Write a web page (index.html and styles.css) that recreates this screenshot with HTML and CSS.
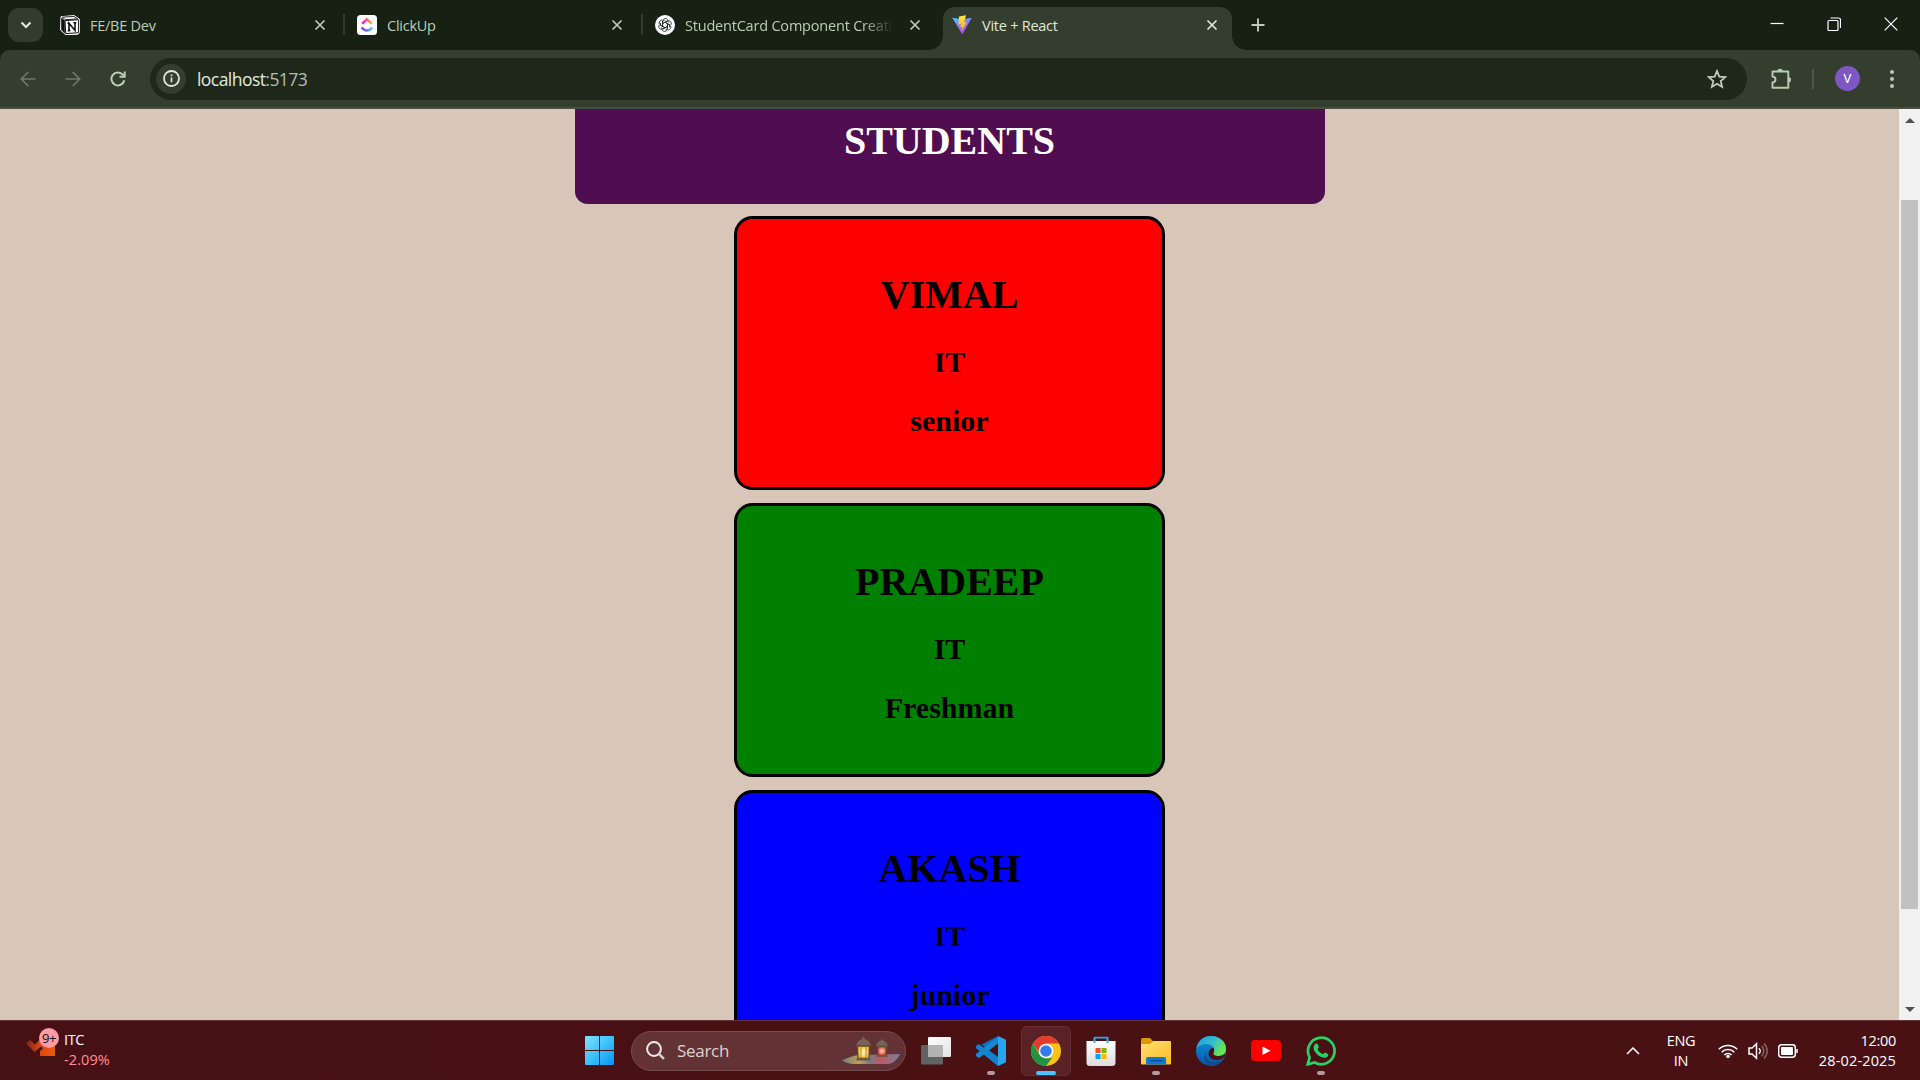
FILE: index.html
```html
<!DOCTYPE html>
<html lang="en">
<head>
<meta charset="utf-8">
<title>Vite + React</title>
<link rel="stylesheet" href="styles.css">
</head>
<body>
<div class="tabstrip">
  <div class="tab-search"><svg width="12" height="8" viewBox="0 0 12 8"><path d="M1.5 1.5 6 6 10.5 1.5" fill="none" stroke="#dfe8d8" stroke-width="2.2"/></svg></div>
  <div class="tab tab-first">
    <svg class="fav" viewBox="0 0 20 20"><path d="M1 1.700 14.200.6 19.400 4.200v13.600l-1.400 1.400-12.600.4L.6 15z" fill="#fff" stroke="#fff" stroke-width="1"/><path d="M1.200 2.600 4.800 5.500v13.200L1.200 14.500z" fill="#111"/><path d="M2.300 2.200 14 1.400l3.600 2.500-12.200.8z" fill="#fff" stroke="#111" stroke-width=".9"/><path d="M5 5.600 18.600 4.700v13l-12.900.900z" fill="#fff" stroke="#111" stroke-width="1"/><path d="M9 15.600V8.200l6 7.200V7.500M7.500 8.200h2.400M13.500 7.700h2.800M7.700 15.600h2.600" fill="none" stroke="#111" stroke-width="1.600"/></svg>
    <span class="title">FE/BE Dev</span>
    <svg class="x" viewBox="0 0 12 12"><path d="M1.500 1.500l9 9m0-9l-9 9"/></svg>
  </div>
  <div class="tab ruled">
    <svg class="fav" viewBox="0 0 20 20"><defs><linearGradient id="cu1"><stop offset="0" stop-color="#ff02f0"/><stop offset="1" stop-color="#ffb800"/></linearGradient><linearGradient id="cu2"><stop offset="0" stop-color="#8930fd"/><stop offset="1" stop-color="#49ccf9"/></linearGradient></defs><rect width="20" height="20" rx="3.500" fill="#fff"/><path d="M5.200 8.600 10 4.400l4.800 4.200" fill="none" stroke="url(#cu1)" stroke-width="2.500"/><path d="M4.800 12.400c2.800 4.200 7.600 4.200 10.400 0" fill="none" stroke="url(#cu2)" stroke-width="2.500"/></svg>
    <span class="title">ClickUp</span>
    <svg class="x" viewBox="0 0 12 12"><path d="M1.500 1.500l9 9m0-9l-9 9"/></svg>
  </div>
  <div class="tab ruled tab-third">
    <svg class="fav" viewBox="0 0 20 20"><circle cx="10" cy="10" r="10" fill="#fff"/><g fill="none" stroke="#222" stroke-width=".8"><path id="petal" d="M7.600 11.400V6.300c0-3 4-3.900 5.300-1.300M7.600 8.600 12 6l2.200 1.300"/><use href="#petal" transform="rotate(60 10 10)"/><use href="#petal" transform="rotate(120 10 10)"/><use href="#petal" transform="rotate(180 10 10)"/><use href="#petal" transform="rotate(240 10 10)"/><use href="#petal" transform="rotate(300 10 10)"/></g></svg>
    <span class="title fade">StudentCard Component Creati</span>
    <svg class="x" viewBox="0 0 12 12"><path d="M1.500 1.500l9 9m0-9l-9 9"/></svg>
  </div>
  <div class="tab active">
    <svg class="fav" viewBox="0 0 20 20"><defs><linearGradient id="v1" x2=".6" y2="1"><stop offset="0" stop-color="#41d1ff"/><stop offset="1" stop-color="#bd34fe"/></linearGradient><linearGradient id="v2" x2="0" y2="1"><stop offset="0" stop-color="#ffea4a"/><stop offset="1" stop-color="#ffa800"/></linearGradient></defs><path d="M.3 2.700 10 4.200l9.700-1.500L10.400 19.600z" fill="url(#v1)"/><path d="M14 .2 7 1.600l-.5 8 2.500-.5-.7 3.400 2.200-.4-.800 4.500 5-9.500-2.700.5z" fill="url(#v2)"/></svg>
    <span class="title">Vite + React</span>
    <svg class="x" viewBox="0 0 12 12"><path d="M1.500 1.500l9 9m0-9l-9 9"/></svg>
  </div>
  <svg class="plus" viewBox="0 0 14 14"><path d="M7 .5v13M.5 7h13"/></svg>
  <div class="window-buttons">
    <svg viewBox="0 0 14 14"><path d="M.5 6.500h13" stroke-width="1.200"/></svg>
    <svg viewBox="0 0 14 14"><rect x="1" y="3.500" width="10" height="10" rx="1"/><path d="M3.500 1h8a2 2 0 0 1 2 2v8"/></svg>
    <svg viewBox="0 0 14 14"><path d="M.7.700l12.600 12.600m0-12.600L.7 13.300"/></svg>
  </div>
</div>
<div class="toolbar-bg">
<div class="toolbar">
  <svg class="nav dim" viewBox="0 0 16 16"><path d="M15.500 8H1.500M8.300 1 1.300 8l7 7"/></svg>
  <svg class="nav dim" viewBox="0 0 16 16"><path d="M.5 8h14M7.700 1l7 7-7 7"/></svg>
  <svg class="nav" viewBox="0 0 16 16"><path d="M14.300 9.300A6.500 6.500 0 1 1 12.800 3.600l2 2M14.700.5v5.300H9.500"/></svg>
  <div class="address">
    <div class="info"><svg width="17" height="17" viewBox="0 0 17 17"><circle cx="8.500" cy="8.500" r="7.500" fill="none" stroke="#dfe8d8" stroke-width="1.800"/><path d="M8.500 7.600v4.700M8.500 4.400v1.800" stroke="#dfe8d8" stroke-width="1.700"/></svg></div>
    <span class="url">localhost<span class="port">:5173</span></span>
    <svg class="star" viewBox="0 0 20 20"><path d="M10 2l2.300 5.600 6 .5-4.600 3.900 1.400 5.900L10 14.800l-5.100 3.100 1.400-5.900L1.700 8.100l6-.5z"/></svg>
  </div>
  <svg class="puzzle" viewBox="0 0 22 22"><path d="M2.500 3.500h15.800v16.300H2.500v-5.300c4-.5 4-5.600 0-6z" fill="none" stroke="#b9cbb0" stroke-width="1.900" stroke-linejoin="round"/><path d="M7.300 3.500a2.800 2.800 0 0 1 5.600 0M18.300 9a2.600 2.600 0 0 1 0 5.400" fill="#b9cbb0"/></svg>
  <span class="divider"></span>
  <span class="avatar">V</span>
  <svg class="dots" viewBox="0 0 4 20"><circle cx="2" cy="3" r="2"/><circle cx="2" cy="10" r="2"/><circle cx="2" cy="17" r="2"/></svg>
</div>
</div>
<div class="viewport">
  <main class="page">
    <header class="banner"><h1>STUDENTS</h1></header>
    <section class="card red"><h1>VIMAL</h1><h2>IT</h2><h2>senior</h2></section>
    <section class="card green"><h1>PRADEEP</h1><h2>IT</h2><h2>Freshman</h2></section>
    <section class="card blue"><h1>AKASH</h1><h2>IT</h2><h2>junior</h2></section>
  </main>
  <div class="scrollbar">
    <svg width="10" height="5" viewBox="0 0 10 5"><path d="M0 5 5 0l5 5z" fill="#505050"/></svg>
    <div class="thumb"></div>
    <svg class="down" width="10" height="5" viewBox="0 0 10 5"><path d="M0 0l5 5 5-5z" fill="#505050"/></svg>
  </div>
</div>
<footer class="taskbar">
  <div class="widget">
    <div class="stock"><svg width="30" height="22" viewBox="0 0 30 22"><defs><linearGradient id="st"><stop offset="0" stop-color="#7e241a"/><stop offset=".5" stop-color="#d9480f"/><stop offset="1" stop-color="#f25a05"/></linearGradient></defs><path d="M0 7.500 4 4l5 4.500L15.500 2l8 7.500L29 5v15H14v-5l3-2.500-2-2L8.500 16z" fill="url(#st)"/></svg><span class="badge">9+</span></div>
    <div class="quote"><div>ITC</div><div class="loss">-2.09%</div></div>
  </div>
  <div class="apps">
    <svg class="start" viewBox="0 0 29 29"><defs><linearGradient id="wn" x2="1" y2="1"><stop offset="0" stop-color="#83e0ff"/><stop offset=".5" stop-color="#3dc1fb"/><stop offset="1" stop-color="#0a91f5"/></linearGradient></defs><path d="M1 0h13v14H0V1a1 1 0 0 1 1-1zM15 0h13a1 1 0 0 1 1 1v13H15zM0 15h14v14H1a1 1 0 0 1-1-1zM15 15h14v13a1 1 0 0 1-1 1H15z" fill="url(#wn)"/></svg>
    <div class="search">
      <svg width="19" height="19" viewBox="0 0 19 19"><circle cx="8" cy="8" r="6.900" fill="none" stroke="#f4e9ea" stroke-width="2"/><path d="M12.900 12.900l5 5" stroke="#d8d0d2" stroke-width="2.500"/></svg>
      <span>Search</span>
      <svg class="lanterns" width="60" height="30" viewBox="0 0 60 30"><defs><radialGradient id="gl"><stop offset="0" stop-color="#fffbd0"/><stop offset="1" stop-color="#f7bd28"/></radialGradient><radialGradient id="gr"><stop offset="0" stop-color="#ffd4a0"/><stop offset="1" stop-color="#df4545"/></radialGradient><linearGradient id="mat"><stop offset="0" stop-color="#737990"/><stop offset=".3" stop-color="#c2a052"/><stop offset=".5" stop-color="#797789"/><stop offset=".65" stop-color="#c35762"/><stop offset="1" stop-color="#74829b"/></linearGradient></defs><path d="M1 24c6-2 12-5 18-5l40-1c-2 5-7 10-13 10H14C8 28 3 26 1 24z" fill="url(#mat)"/><path d="M22.500 0l1.500 3c3 1 5 3 5.500 6v2h-14V9c.5-3 2.500-5 5.500-6z" fill="#756457"/><path d="M16.500 10h12l-.5 12.500H17z" fill="url(#gl)" stroke="#5e4930" stroke-width="1.300"/><path d="M20 10v12.500m5-12.500v12.500" stroke="#a67420" stroke-width=".8"/><path d="M15.500 22h14v2.500h-14z" fill="#6e5844"/><path d="M41 2.500l1 2c2.500.8 4 2.200 4.500 4.500v2h-11V9c.5-2.300 2-3.700 4.500-4.500z" fill="#756457"/><path d="M36.500 10.500h9l-.5 9h-8z" fill="url(#gr)" stroke="#65473c" stroke-width="1.500"/><path d="M35.500 19h11v2h-11z" fill="#6e5844"/></svg>
    </div>
    <div class="app"><svg viewBox="0 0 30 30"><defs><linearGradient id="tv" x2="1" y2="1"><stop offset="0" stop-color="#fff"/><stop offset="1" stop-color="#e2e2e2"/></linearGradient></defs><rect y="9" width="22" height="19.500" rx="1.300" fill="#626262"/><rect x="7" y="1" width="23" height="20" rx="1.300" fill="url(#tv)"/><path d="M7 9h15v12H8.200A1.200 1.200 0 0 1 7 19.800z" fill="#b3b3b3"/></svg></div>
    <div class="app running"><svg viewBox="0 0 30 30"><path d="M22 0 8.500 13 3 8.500 0 10v2l22 18 1-8.500L5.500 8.500z" fill="#0873b8"/><path d="M22.500 0 0 18v2l3 2 5-3.600L22.500 7z" fill="#1689d2"/><path d="M3 8.200.2 10v2.200L22 30V21.500z" fill="#1283cc"/><path d="M22 0l7 3.200c.7.300 1 .800 1 1.500v20.600c0 .7-.3 1.200-1 1.500L22 30z" fill="#29a5ee"/></svg></div>
    <div class="app current"><svg viewBox="0 0 30 30"><circle cx="15" cy="15" r="15" fill="#fbc116"/><path d="M2 7.500A15 15 0 0 1 28 7.500H15L9 18z" fill="#e33b2e"/><path d="M2 7.500 8.500 18.700 15 22.500l6-.5-6 8A15 15 0 0 1 2 7.500z" fill="#229342"/><circle cx="15" cy="15" r="7.300" fill="#fff"/><circle cx="15" cy="15" r="5.800" fill="#347cec"/></svg></div>
    <div class="app"><svg viewBox="0 0 30 30"><defs><linearGradient id="ms" x2="0" y2="1"><stop offset="0" stop-color="#fff"/><stop offset="1" stop-color="#dcdcdc"/></linearGradient></defs><path d="M8.500 6V1.700h13V6" fill="none" stroke="#29a9e0" stroke-width="1.700"/><path d="M.5 5h29v21.500a3.500 3.500 0 0 1-3.500 3.500H4a3.500 3.500 0 0 1-3.500-3.500z" fill="url(#ms)"/><path d="M8.500 7V2M21.500 7V2" stroke="#29a9e0" stroke-width="1.700"/><path d="M9.500 12h5v5h-5z" fill="#f25022"/><path d="M15.500 12h5v5h-5z" fill="#7fba00"/><path d="M9.500 18h5v5h-5z" fill="#00a4ef"/><path d="M15.500 18h5v5h-5z" fill="#ffb900"/></svg></div>
    <div class="app running"><svg viewBox="0 0 30 30"><defs><linearGradient id="fd" x2="1" y2="1"><stop offset="0" stop-color="#ffdf70"/><stop offset="1" stop-color="#fabc25"/></linearGradient></defs><path d="M0 3.500A1.500 1.500 0 0 1 1.500 2H9l3 3v5H0z" fill="#dc9a02"/><path d="M0 8h9l3.500-3H29a1 1 0 0 1 1 1v21.500a1 1 0 0 1-1 1H1a1 1 0 0 1-1-1z" fill="url(#fd)"/><path d="M5 28.500V23a2 2 0 0 1 2-2h16a2 2 0 0 1 2 2v5.500z" fill="#0f78d0"/><path d="M8.500 24.700h13" stroke="#074b8e" stroke-width="1.300"/></svg></div>
    <div class="app"><svg viewBox="0 0 30 30"><defs><linearGradient id="ed" x2="1" y2=".5"><stop offset="0" stop-color="#1b9de2"/><stop offset=".6" stop-color="#35c1c8"/><stop offset="1" stop-color="#67e84f"/></linearGradient><linearGradient id="eb" x2="0" y2="1"><stop offset="0" stop-color="#1295dc"/><stop offset="1" stop-color="#0754a8"/></linearGradient></defs><circle cx="15" cy="15" r="15" fill="url(#eb)"/><path d="M10 17c-1 6 4 10 10 8.500 3-.5 5-1.500 7.500-3-3 5-7 7.500-12.500 7.500C8 29 7 20 10 17z" fill="#104c94"/><path d="M.3 12.500C2 4 8 0 15 0c8 0 15 5 15 12.500 0 5-3 7.500-7.500 7.500-3.500 0-6-1-5-3C20 12 16 8 10.500 8 6 8 2.500 9.500.3 12.500z" fill="url(#ed)"/><path d="M17.500 17c-1 2 1.500 3 5 3 3 0 5-1 6-2.500l.7 2.500-3.500 3c-8 3-14-1-13-6.500.4-2.800 2.300-4.500 4.800-4.800.8 1.800.8 3.600 0 5.300z" fill="#4a1014"/></svg></div>
    <div class="app"><svg viewBox="0 0 30 30"><rect y="4" width="30" height="21" rx="4" fill="#f00"/><path d="M11.500 10.500v8.500l8-4.250z" fill="#fff"/></svg></div>
    <div class="app running"><svg viewBox="0 0 30 30"><path d="M1.700 28.300l1.900-7A13.300 13.300 0 1 1 8.700 26.500z" fill="none" stroke="#25d366" stroke-width="2.700"/><path d="M9.200 8c.5-.5 2-.6 2.400.2l1.200 2.900c.2.600-1.200 1.900-1.200 2.200 1.200 2.400 3 3.900 5.300 4.900.4 0 1.500-1.800 2-1.700l3 1.500c.6.400.3 2-.5 2.700-1.500 1.400-3.500 1.300-6.200.2-3.400-1.500-5.700-4-7.200-7C7.200 11.500 7.600 9.300 9.200 8z" fill="#25d366"/></svg></div>
  </div>
  <div class="tray">
    <svg class="up" viewBox="0 0 14 8"><path d="M1 7l6-6 6 6"/></svg>
    <div class="lang">ENG<br>IN</div>
    <svg class="wifi" viewBox="0 0 20 16"><path d="M.8 6.300a13 13 0 0 1 18.400 0M3.600 9.200a9 9 0 0 1 12.800 0M6.300 12a5.200 5.200 0 0 1 7.400 0"/><circle cx="10" cy="13.500" r="1.800" fill="#fff" stroke="none"/></svg>
    <svg class="sound" viewBox="0 0 20 18"><path d="M1 6v6h3l4.500 4.200V1.800L4 6z"/><path d="M11 6.200a4 4 0 0 1 0 5.600"/><path d="M13.700 3.800a7.500 7.500 0 0 1 0 10.400M16 1.500a10.500 10.500 0 0 1 0 15" opacity=".35"/></svg>
    <svg class="battery" viewBox="0 0 20 14"><rect x=".7" y=".7" width="16.600" height="12.600" rx="3"/><rect x="3" y="3" width="12" height="8" rx="1" fill="#fff" stroke="none"/><path d="M19 5v4"/></svg>
    <div class="clock">12:00<br><span class="date">28-02-2025</span></div>
  </div>
</footer>
</body>
</html>
```
FILE: styles.css
```css
* { box-sizing: border-box; }
body {
  margin: 0;
  width: 1920px;
  height: 1080px;
  overflow: hidden;
  display: flex;
  flex-direction: column;
  font-family: "Open Sans", "Noto Sans", sans-serif;
}
svg { display: block; flex: none; }

/* Tab strip */
.tabstrip {
  height: 50px;
  flex: none;
  display: flex;
  align-items: flex-start;
  padding: 8px 22px 0 8px;
  background: #172113;
}
.tab-search {
  width: 35px;
  height: 34px;
  border-radius: 11px;
  background: #313c2d;
  display: grid;
  place-items: center;
}
.tab {
  position: relative;
  flex: none;
  width: 298px;
  height: 34px;
  display: flex;
  align-items: center;
  padding: 0 20px 0 12px;
  color: #bccdb3;
  font-size: 14.500px;
}
.tab-first { padding: 0 19px 0 17px; width: 302px; }
.tab-third { width: 300px; padding-right: 22px; }
.ruled::before {
  content: "";
  position: absolute;
  left: -2px;
  top: 6px;
  width: 2px;
  height: 21px;
  background: #313c2d;
}
.fav { width: 20px; height: 20px; }
.title {
  flex: 1;
  margin: 0 12px 0 10px;
  white-space: nowrap;
  letter-spacing: -.25px;
}
.fade { mask-image: linear-gradient(to right, #000 calc(100% - 30px), transparent); margin-right: 16px; letter-spacing: -.2px; }
.x { width: 12px; height: 12px; stroke: currentColor; stroke-width: 1.700; fill: none; }
.active {
  width: 289px;
  height: 43px;
  margin-top: -1px;
  padding: 0 14px 7px 9px;
  background: #333e2f;
  border-radius: 12px 12px 0 0;
  color: #e0e8d9;
}
.active::before, .active::after {
  content: "";
  position: absolute;
  bottom: 0;
  width: 14px;
  height: 14px;
}
.active::before { left: -14px; background: radial-gradient(circle at 0 0, transparent 13.500px, #333e2f 14px); }
.active::after { right: -14px; background: radial-gradient(circle at 100% 0, transparent 13.500px, #333e2f 14px); }
.plus { width: 14px; height: 14px; margin: 10px 0 0 19px; stroke: #bccdb3; stroke-width: 1.900; }
.window-buttons { display: flex; gap: 43px; margin: 9px 0 0 auto; }
.window-buttons svg { width: 14px; height: 14px; fill: none; stroke: #fff; stroke-width: 1.200; }

/* Toolbar */
.toolbar-bg { background: #172113; flex: none; }
.toolbar {
  height: 59px;
  display: flex;
  align-items: center;
  padding: 0 24px 0 20px;
  background: #333e2f;
  border-bottom: 2px solid #464f42;
  border-radius: 10px 10px 0 0;
}
.nav { width: 16px; height: 16px; margin-right: 29px; fill: none; stroke: #bccdb3; stroke-width: 2; }
.nav.dim { stroke: #6d7a66; stroke-width: 1.700; }
.address {
  flex: none;
  width: 1597px;
  height: 42px;
  margin-left: -5px;
  border-radius: 21px;
  background: #1e281a;
  display: flex;
  align-items: center;
  padding: 0 20px 0 6px;
}
.info { width: 30px; height: 30px; border-radius: 50%; background: #333e2f; display: grid; place-items: center; }
.url { margin-left: 11px; font-size: 17.500px; letter-spacing: -.55px; color: #e3e8df; }
.port { color: #b5beb0; }
.star { width: 20px; height: 20px; margin-left: auto; fill: none; stroke: #c4c8bf; stroke-width: 1.800; }
.puzzle { width: 22px; height: 22px; margin-left: 23px; }
.divider { width: 2px; height: 20px; margin: 0 21px 0 20px; background: #4c5a42; }
.avatar {
  width: 25px;
  height: 25px;
  border-radius: 50%;
  background: #7e57c2;
  color: #fff;
  display: grid;
  place-items: center;
  font: 13px Roboto, sans-serif;
}
.dots { width: 4px; height: 20px; margin-left: 30px; fill: #b9cbb0; }

/* Page */
.viewport { height: 911px; flex: none; display: flex; overflow: hidden; }
.page {
  width: 1899px;
  overflow: hidden;
  background: #d8c6b8;
  font-family: "Liberation Serif", serif;
  text-align: center;
  display: flex;
  flex-direction: column;
  align-items: center;
}
.page h1 { font-size: 40px; line-height: 46px; margin: 27px 0; }
.page h2 { font-size: 30px; line-height: 34px; margin: 0 0 25px; }
.banner {
  flex: none;
  width: 750px;
  height: 95px;
  background: #500d50;
  border-radius: 0 0 12.500px 12.500px;
  color: #fff;
}
.page .banner h1 { margin: 9px 0 0; }
.card {
  flex: none;
  width: 431px;
  height: 274px;
  margin-top: 13px;
  padding: 26px 25px 0;
  border: 3px solid #000;
  border-radius: 18.750px;
  color: #000;
}
.banner + .card { margin-top: 12px; }
.red { background: #f00; }
.green { background: #008000; }
.blue { background: #00f; }
.scrollbar {
  width: 21px;
  background: #f1f1f1;
  display: flex;
  flex-direction: column;
  align-items: center;
  padding: 9px 0 8px;
}
.thumb { width: 17px; height: 709px; margin-top: 77px; background: #c1c1c1; }
.down { margin-top: auto; }

/* Taskbar */
.taskbar {
  height: 60px;
  flex: none;
  display: grid;
  grid-template-columns: 585px 1fr 320px;
  background: linear-gradient(to right, #461014, #4a1014 50%, #491114);
  border-top: 1px solid #623235;
  color: #fff;
  font-size: 14.500px;
}
.widget { display: flex; padding-left: 26px; }
.stock { position: relative; padding-top: 15px; width: 30px; }
.badge {
  position: absolute;
  left: 13px;
  top: 7px;
  width: 20px;
  height: 20px;
  border-radius: 50%;
  background: #ff99a4;
  color: #111;
  font-size: 13px;
  line-height: 20px;
  text-align: center;
  letter-spacing: -.5px;
}
.quote { margin-left: 8px; padding-top: 9px; line-height: 20px; letter-spacing: -.4px; }
.loss { color: #ff8f9d; letter-spacing: .1px; }
.apps { display: flex; align-items: center; }
.start { width: 29px; height: 29px; }
.search {
  width: 275px;
  height: 40px;
  margin: 0 5px 0 17px;
  padding: 0 4px 0 14px;
  border: 1px solid #764b4d;
  border-radius: 20px;
  background: #633234;
  display: flex;
  align-items: center;
  gap: 12px;
  font-size: 17px;
  letter-spacing: -.3px;
  color: #e0d1d2;
}
.lanterns { margin-left: auto; }
.app { position: relative; width: 50px; height: 50px; margin-right: 5px; border-radius: 6px; display: grid; place-items: center; }
.app svg { width: 30px; height: 30px; }
.current { background: #5a2226; border: 1px solid #643034; }
.running::after, .current::after {
  content: "";
  position: absolute;
  bottom: 1px;
  left: 21px;
  width: 8px;
  height: 4px;
  border-radius: 2px;
  background: #b49a9c;
}
.current::after { left: 14px; bottom: 0; width: 20px; background: #4cc2ff; }
.tray { display: flex; align-items: center; padding-left: 26px; letter-spacing: -.3px; line-height: 20px; }
.tray svg { fill: none; stroke: #fff; stroke-width: 1.500; }
.up { width: 14px; height: 8px; }
.lang { width: 30px; margin-left: 26px; text-align: center; }
.wifi { width: 20px; height: 16px; margin-left: 22px; }
.sound { width: 20px; height: 18px; margin-left: 10px; }
.battery { width: 20px; height: 14px; margin-left: 10px; }
.clock { width: 90px; margin-left: 8px; text-align: right; white-space: nowrap; }
.date { letter-spacing: .15px; }
```
